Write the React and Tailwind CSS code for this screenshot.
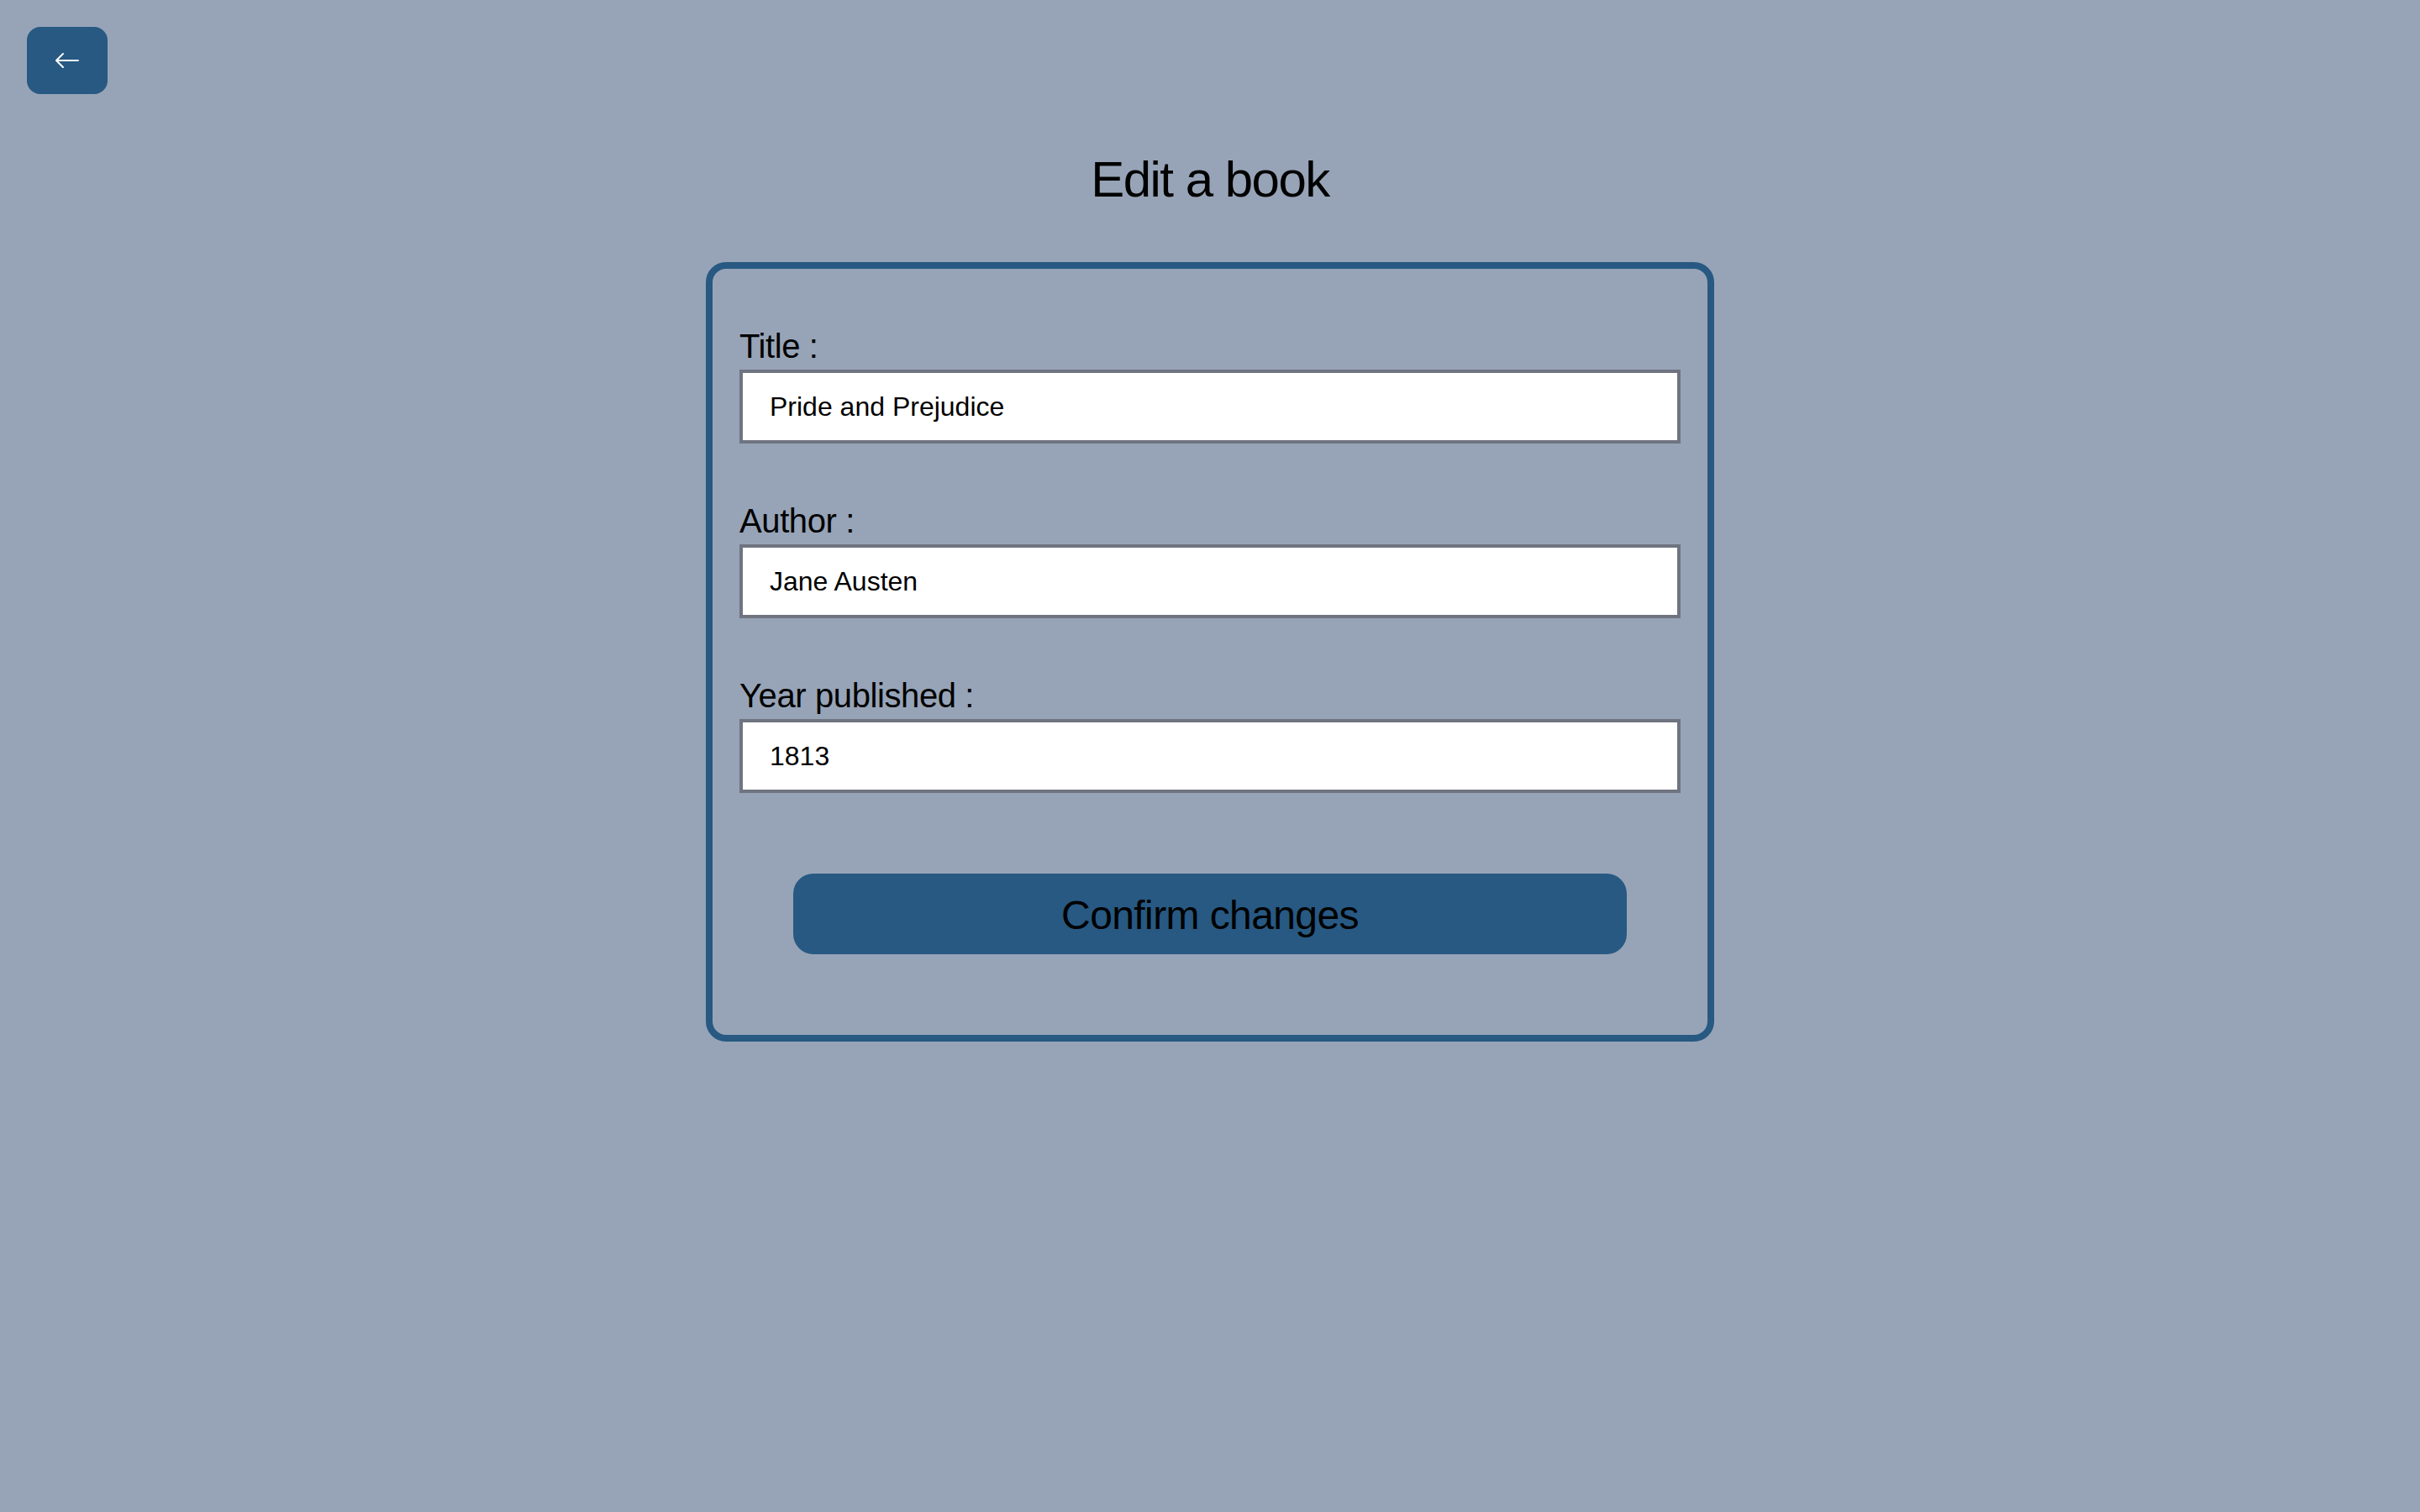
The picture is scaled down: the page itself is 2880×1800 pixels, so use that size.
import React, { useState } from "react";
import { BsArrowLeft } from "react-icons/bs";

const Field = ({ label, value, onChange, type = "text" }) => (
  <div className="my-8 flex flex-col">
    <label className="text-[40px] leading-[56px] tracking-[-0.4px] text-black">{label}</label>
    <input
      type={type}
      value={value}
      onChange={(e) => onChange(e.target.value)}
      className="w-full border-4 border-[#6f7480] bg-white px-8 py-4 text-[32px] leading-[48px] text-black outline-none"
    />
  </div>
);

const EditBook = () => {
  const [title, setTitle] = useState("Pride and Prejudice");
  const [author, setAuthor] = useState("Jane Austen");
  const [year, setYear] = useState("1813");

  return (
    <div className="min-h-screen bg-[#97a4b7] p-8 font-['Liberation_Sans',Arial,sans-serif] text-black">
      <div className="flex">
        <button className="flex h-[80px] w-[96px] items-center justify-center rounded-[16px] bg-[#275982] text-white">
          <BsArrowLeft size={32} />
        </button>
      </div>

      <h1 className="mt-[66px] mb-[62px] text-center text-[60px] leading-[72px] tracking-tight">
        Edit a book
      </h1>

      <div className="mx-auto flex w-[1200px] flex-col rounded-[24px] border-8 border-[#275982] p-8">
        <Field label="Title :" value={title} onChange={setTitle} />
        <Field label="Author :" value={author} onChange={setAuthor} />
        <Field label="Year published :" value={year} onChange={setYear} type="number" />
        <button className="m-16 rounded-[24px] bg-[#275982] pt-[18px] pb-[14px] text-[48px] leading-[64px] tracking-[-0.6px] text-black">
          Confirm changes
        </button>
      </div>
    </div>
  );
};

export default function App() {
  return <EditBook />;
}
